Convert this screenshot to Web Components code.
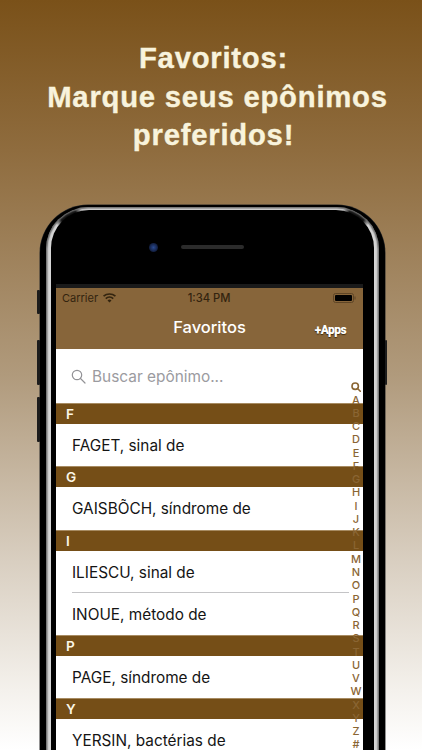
<!DOCTYPE html>
<html lang="pt-BR"><head><meta charset="utf-8"><title>Favoritos</title>
<style>
html,body{margin:0;padding:0;height:750px;overflow:hidden}
body{font-family:"Inter","Liberation Sans",sans-serif}
</style></head>
<body>
<app-page>
  <promo-title slot="title"><span>Favoritos:</span><span class="m">Marque seus epônimos</span><span>preferidos!</span></promo-title>
  <phone-frame>
    <status-bar></status-bar>
    <nav-bar>Favoritos</nav-bar>
    <search-box>Buscar epônimo...</search-box>
    <section-index></section-index>
    <section-header>F</section-header>
    <list-row>FAGET, sinal de</list-row>
    <section-header>G</section-header>
    <list-row>GAISBÕCH, síndrome de</list-row>
    <section-header>I</section-header>
    <list-row sep>ILIESCU, sinal de</list-row>
    <list-row>INOUE, método de</list-row>
    <section-header>P</section-header>
    <list-row>PAGE, síndrome de</list-row>
    <section-header>Y</section-header>
    <list-row>YERSIN, bactérias de</list-row>
  </phone-frame>
</app-page>
<script>
function def(name, css, html){
  customElements.define(name, class extends HTMLElement{
    constructor(){super();this.attachShadow({mode:'open'}).innerHTML='<style>'+css+'</style>'+html;}
  });
}
def('app-page',
`:host{display:flex;flex-direction:column;height:750px;overflow:hidden;
 background:linear-gradient(180deg,#7a5119 0%,#8f6c3e 20%,#b09a7c 50%,#d9cfc1 75%,#f4f1ec 92%,#ffffff 100%)}`,
`<slot name="title"></slot><slot></slot>`);
def('promo-title',
`:host{display:block;flex:none;height:205px;box-sizing:border-box;padding:39px 0 0 5px;text-align:center;color:#f8f3dc;
 font:700 29.300px/38.500px "Liberation Sans",Arial,sans-serif;letter-spacing:.75px;-webkit-text-stroke:.35px #f8f3dc}
::slotted(span){display:block}
::slotted(.m){margin-left:8px}`,
`<slot></slot>`);
def('phone-frame',
`:host{display:block;margin-left:40px;width:345px;position:relative;flex:none}
.outer{background:#000;border-radius:48px 48px 0 0;padding:2px 6px 0;box-shadow:0 0 0 .5px #2a2a2a}
.ring{background:radial-gradient(circle 15px at 22px 8px,#111 55%,transparent 100%),radial-gradient(circle 15px at calc(100% - 22px) 8px,#111 55%,transparent 100%),#d6d6d6;
 box-shadow:inset 0 0 1.500px 1.500px #6e6e6e;border-radius:42px 42px 0 0;padding:3px 5px 0}
.bezel{background:#000;border-radius:38px 38px 0 0;padding:0 11px 0 5px}
.top{height:74px;display:flex;align-items:center;padding-left:92px;gap:23px}
.cam{width:9px;height:9px;border-radius:50%;background:radial-gradient(circle at 50% 50%,#2a4a90 0,#16264e 55%,#0b0f1c 100%);flex:none;margin-left:1px}
.spk{width:63px;height:4px;border-radius:2px;background:#2b2b2b;flex:none}
.strip{height:4px;background:#1a1a1a}
.screen{background:#fff;height:470px;overflow:hidden;position:relative}
.btn{position:absolute;background:#1c1c1c;border-radius:1px}`,
`<div class="btn" style="left:-3px;top:85px;width:3px;height:24px"></div>
<div class="btn" style="left:-3px;top:135px;width:3px;height:45px"></div>
<div class="btn" style="left:-3px;top:192px;width:3px;height:45px"></div>
<div class="btn" style="right:-2px;top:135px;width:2px;height:45px"></div>
<div class="outer"><div class="ring"><div class="bezel">
<div class="top"><span class="cam"></span><span class="spk"></span></div>
<div class="strip"></div>
<div class="screen"><slot></slot></div>
</div></div></div>`);
def('status-bar',
`:host{display:flex;align-items:center;height:19px;background:#87653a;color:#33240f;padding:0 7px 0 6px;
 font:400 11px "Inter","Liberation Sans",sans-serif}
.l{display:flex;align-items:center;gap:5px;flex:1}
.t{flex:none;font-weight:500;font-size:11.200px}
.r{flex:1;display:flex;justify-content:flex-end}
svg{display:block}`,
`<div class="l"><span>Carrier</span>
<svg width="13" height="10" viewBox="0 0 13 10"><path d="M6.500 9.600 4.500 7.400a3 3 0 0 1 4 0zM3.400 6.200 2.200 4.900a6.400 6.400 0 0 1 8.600 0L9.600 6.200a4.600 4.600 0 0 0-6.200 0zM1.100 3.800 0 2.600a9.800 9.800 0 0 1 13 0l-1.100 1.200a8.100 8.100 0 0 0-10.800 0z" fill="#33240f"/></svg></div>
<div class="t">1:34 PM</div>
<div class="r"><svg width="23" height="10" viewBox="0 0 23 10"><rect x=".5" y=".5" width="20" height="9" rx="2" fill="none" stroke="#5e4526"/><rect x="2" y="2" width="17" height="6" rx="1" fill="#000"/><rect x="21.500" y="3.500" width="1" height="3" fill="#5e4526"/></svg></div>`);
def('nav-bar',
`:host{display:block;height:42px;background:#87653a;position:relative;text-align:center;color:#fff;
 font:500 16.500px/41px "Inter","Liberation Sans",sans-serif}
.apps{position:absolute;right:17px;top:3px;font:900 12px/41px "Roboto","Liberation Sans",sans-serif;letter-spacing:-.55px;text-shadow:0 1px 1px #3c2a10}`,
`<slot></slot><span class="apps">+Apps</span>`);
def('search-box',
`:host{display:flex;align-items:center;height:54px;background:#fff;box-sizing:border-box;padding:0 0 0 15px;gap:6px;color:#9b9b9f;
 font:400 15.400px "Inter","Liberation Sans",sans-serif}
svg{display:block;flex:none}`,
`<svg width="15" height="15" viewBox="0 0 15 15" fill="none" stroke="#929296" stroke-width="1.200"><circle cx="6" cy="6" r="4.700"/><path d="M9.500 9.500 14 14" stroke-linecap="round"/></svg><span><slot></slot></span>`);
def('section-header',
`:host{display:block;height:21.100px;box-sizing:border-box;background:#754e17;padding-left:10px;color:#fbf6e6;
 font:600 13.600px/21.800px "Inter","Liberation Sans",sans-serif;border-top:.5px solid #a78b62;overflow:hidden}`,
`<slot></slot>`);
def('list-row',
`:host{display:block;height:42.200px;background:#fff;box-sizing:border-box;padding-left:16px;color:#141414;position:relative;
 font:400 15.350px/43.500px "Inter","Liberation Sans",sans-serif}
:host([sep]) .s{position:absolute;left:16px;right:14px;bottom:0;height:1px;background:#c4c4c6}`,
`<slot></slot><div class="s"></div>`);
def('section-index',
`:host{position:absolute;right:0;top:91.800px;width:14px;z-index:2;display:flex;flex-direction:column;align-items:center;color:#8a6533;
 font:500 11px/10px "Inter","Liberation Sans",sans-serif}
span{display:block;box-sizing:border-box;height:13.270px;padding-top:1.500px;text-align:center}
svg{display:block;margin-top:1px}`,
`<span><svg width="10" height="10" viewBox="0 0 10 10" fill="none" stroke="#8a6533" stroke-width="1.600"><circle cx="4.200" cy="4.200" r="3.200"/><path d="M6.500 6.500 9.300 9.300" stroke-linecap="round"/></svg></span>`+
'ABCDEFGHIJKLMNOPQRSTUVWXYZ#'.split('').map(c=>'<span>'+c+'</span>').join(''));
</script>
</body></html>
